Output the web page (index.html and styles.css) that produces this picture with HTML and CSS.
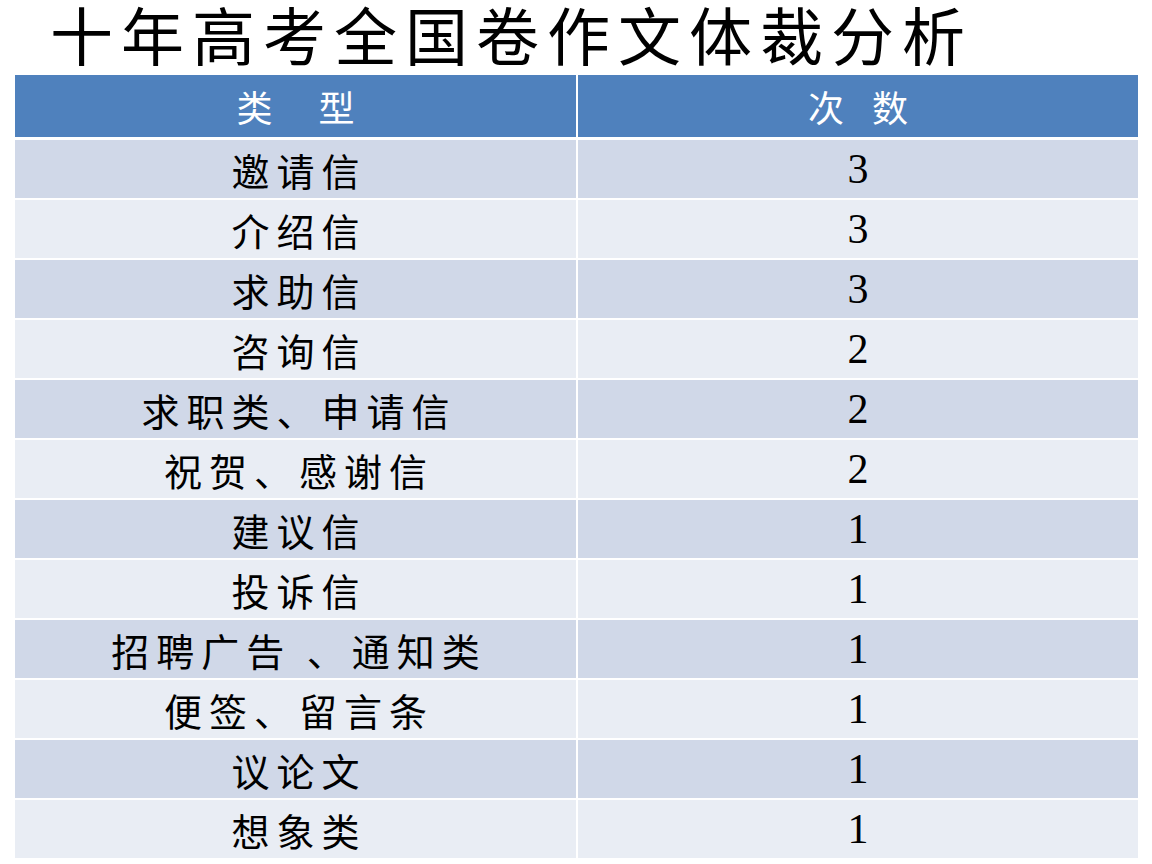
FILE: index.html
```html
<!DOCTYPE html>
<html lang="zh-CN">
<head>
<meta charset="utf-8">
<title>十年高考全国卷作文体裁分析</title>
<link rel="stylesheet" href="styles.css">
</head>
<body>
<div class="page">
  <h1 class="title">十年高考全国卷作文体裁分析</h1>
  <div class="table">
    <div class="head cell">类&nbsp; 型</div>
    <div class="head cell">次 数</div>

    <div class="cell odd name">邀请信</div><div class="cell odd num">3</div>
    <div class="cell even name">介绍信</div><div class="cell even num">3</div>
    <div class="cell odd name">求助信</div><div class="cell odd num">3</div>
    <div class="cell even name">咨询信</div><div class="cell even num">2</div>
    <div class="cell odd name">求职类、申请信</div><div class="cell odd num">2</div>
    <div class="cell even name">祝贺、感谢信</div><div class="cell even num">2</div>
    <div class="cell odd name">建议信</div><div class="cell odd num">1</div>
    <div class="cell even name">投诉信</div><div class="cell even num">1</div>
    <div class="cell odd name">招聘广告 、通知类</div><div class="cell odd num">1</div>
    <div class="cell even name">便签、留言条</div><div class="cell even num">1</div>
    <div class="cell odd name">议论文</div><div class="cell odd num">1</div>
    <div class="cell even name">想象类</div><div class="cell even num">1</div>
  </div>
</div>
</body>
</html>
```

FILE: styles.css
```css
html, body {
  margin: 0;
  padding: 0;
  background: #ffffff;
}

.page {
  width: 1152px;
  height: 864px;
  overflow: hidden;
  font-family: "Noto Sans CJK SC", "Noto Sans", sans-serif;
  color: #000000;
}

.title {
  margin: 0;
  box-sizing: border-box;
  height: 75px;
  padding: 0 0 9px 50px;
  line-height: 66px;
  font-size: 63px;
  font-weight: 400;
  letter-spacing: 8px;
  white-space: nowrap;
}

.table {
  margin-left: 15px;
  width: 1123px;
  display: grid;
  grid-template-columns: 561px 560px;
  grid-template-rows: 63px repeat(12, 58px);
  column-gap: 2px;
  row-gap: 2px;
}

.cell {
  display: flex;
  align-items: center;
  justify-content: center;
  white-space: nowrap;
}

.head {
  align-self: start;
  height: 62px;
  background: #4f81bd;
  color: #ffffff;
  font-size: 36px;
  letter-spacing: 10px;
  padding-left: 10px;
}

.odd {
  background: #d0d8e8;
}

.even {
  background: #e9edf4;
}

.name {
  font-size: 38px;
  letter-spacing: 7px;
  padding-left: 7px;
}

.num {
  font-family: "Liberation Serif", "Times New Roman", serif;
  font-size: 42px;
}
```
